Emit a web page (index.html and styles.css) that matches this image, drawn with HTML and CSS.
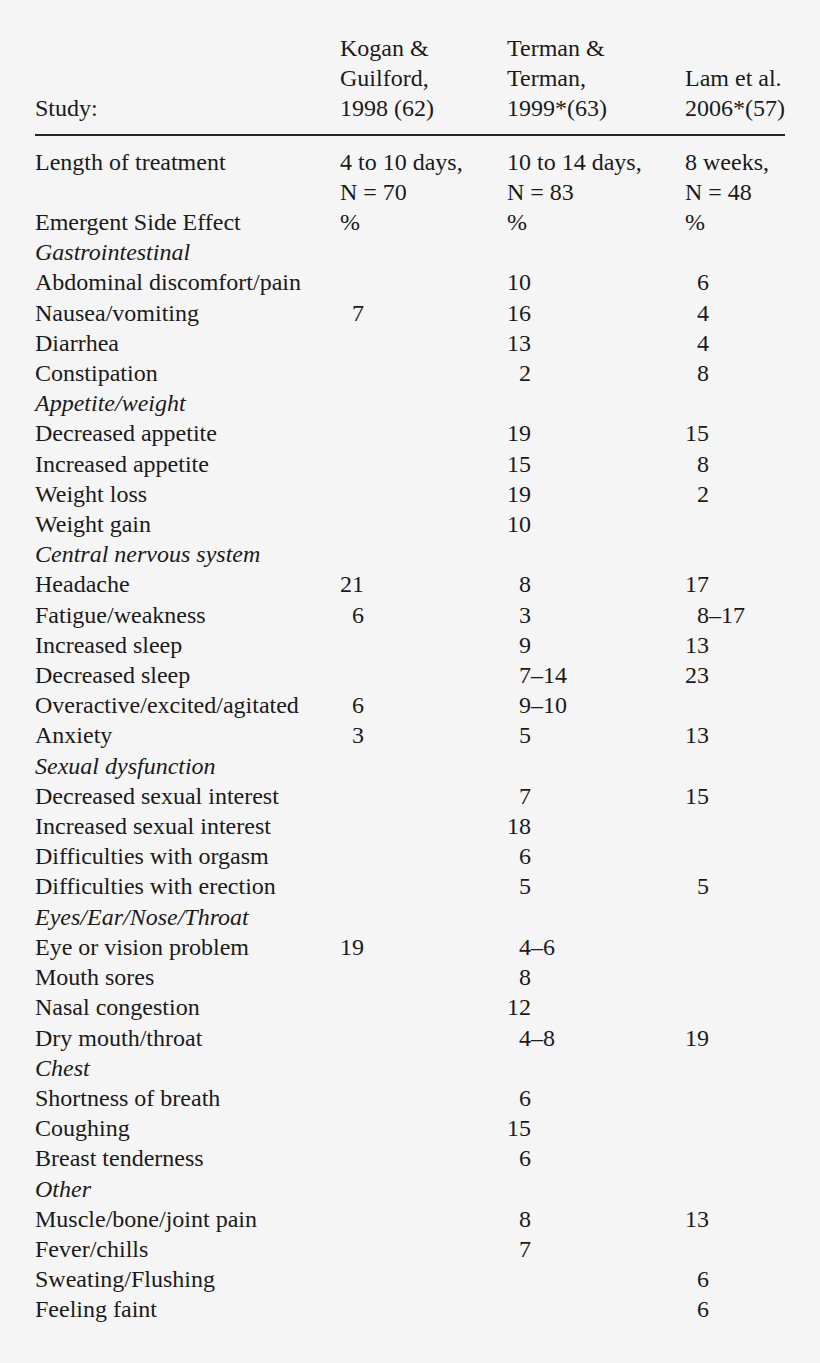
FILE: index.html
```html
<!DOCTYPE html>
<html lang="en">
<head>
    <meta charset="UTF-8">
    <meta name="viewport" content="width=device-width, initial-scale=1.0">
    <title>Emergent Side Effects</title>
    <link rel="stylesheet" href="styles.css">
</head>
<body>
    <table class="effects">
        <colgroup>
            <col class="c-label">
            <col class="c-kogan">
            <col class="c-terman">
            <col class="c-lam">
        </colgroup>
        <thead>
            <tr>
                <th>Study:</th>
                <th>Kogan &amp;<br>Guilford,<br>1998 (62)</th>
                <th>Terman &amp;<br>Terman,<br>1999*(63)</th>
                <th>Lam et al.<br>2006*(57)</th>
            </tr>
        </thead>
        <tbody>
            <tr class="first">
                <td>Length of treatment</td>
                <td>4 to 10 days,<br>N = 70</td>
                <td>10 to 14 days,<br>N = 83</td>
                <td>8 weeks,<br>N = 48</td>
            </tr>
            <tr>
                <td>Emergent Side Effect</td>
                <td>%</td>
                <td>%</td>
                <td>%</td>
            </tr>
            <tr class="group"><td colspan="4">Gastrointestinal</td></tr>
            <tr><td>Abdominal discomfort/pain</td><td></td><td><span class="n">10</span></td><td><span class="n">6</span></td></tr>
            <tr><td>Nausea/vomiting</td><td><span class="n">7</span></td><td><span class="n">16</span></td><td><span class="n">4</span></td></tr>
            <tr><td>Diarrhea</td><td></td><td><span class="n">13</span></td><td><span class="n">4</span></td></tr>
            <tr><td>Constipation</td><td></td><td><span class="n">2</span></td><td><span class="n">8</span></td></tr>
            <tr class="group"><td colspan="4">Appetite/weight</td></tr>
            <tr><td>Decreased appetite</td><td></td><td><span class="n">19</span></td><td><span class="n">15</span></td></tr>
            <tr><td>Increased appetite</td><td></td><td><span class="n">15</span></td><td><span class="n">8</span></td></tr>
            <tr><td>Weight loss</td><td></td><td><span class="n">19</span></td><td><span class="n">2</span></td></tr>
            <tr><td>Weight gain</td><td></td><td><span class="n">10</span></td><td></td></tr>
            <tr class="group"><td colspan="4">Central nervous system</td></tr>
            <tr><td>Headache</td><td><span class="n">21</span></td><td><span class="n">8</span></td><td><span class="n">17</span></td></tr>
            <tr><td>Fatigue/weakness</td><td><span class="n">6</span></td><td><span class="n">3</span></td><td><span class="n">8</span>–17</td></tr>
            <tr><td>Increased sleep</td><td></td><td><span class="n">9</span></td><td><span class="n">13</span></td></tr>
            <tr><td>Decreased sleep</td><td></td><td><span class="n">7</span>–14</td><td><span class="n">23</span></td></tr>
            <tr><td>Overactive/excited/agitated</td><td><span class="n">6</span></td><td><span class="n">9</span>–10</td><td></td></tr>
            <tr><td>Anxiety</td><td><span class="n">3</span></td><td><span class="n">5</span></td><td><span class="n">13</span></td></tr>
            <tr class="group"><td colspan="4">Sexual dysfunction</td></tr>
            <tr><td>Decreased sexual interest</td><td></td><td><span class="n">7</span></td><td><span class="n">15</span></td></tr>
            <tr><td>Increased sexual interest</td><td></td><td><span class="n">18</span></td><td></td></tr>
            <tr><td>Difficulties with orgasm</td><td></td><td><span class="n">6</span></td><td></td></tr>
            <tr><td>Difficulties with erection</td><td></td><td><span class="n">5</span></td><td><span class="n">5</span></td></tr>
            <tr class="group"><td colspan="4">Eyes/Ear/Nose/Throat</td></tr>
            <tr><td>Eye or vision problem</td><td><span class="n">19</span></td><td><span class="n">4</span>–6</td><td></td></tr>
            <tr><td>Mouth sores</td><td></td><td><span class="n">8</span></td><td></td></tr>
            <tr><td>Nasal congestion</td><td></td><td><span class="n">12</span></td><td></td></tr>
            <tr><td>Dry mouth/throat</td><td></td><td><span class="n">4</span>–8</td><td><span class="n">19</span></td></tr>
            <tr class="group"><td colspan="4">Chest</td></tr>
            <tr><td>Shortness of breath</td><td></td><td><span class="n">6</span></td><td></td></tr>
            <tr><td>Coughing</td><td></td><td><span class="n">15</span></td><td></td></tr>
            <tr><td>Breast tenderness</td><td></td><td><span class="n">6</span></td><td></td></tr>
            <tr class="group"><td colspan="4">Other</td></tr>
            <tr><td>Muscle/bone/joint pain</td><td></td><td><span class="n">8</span></td><td><span class="n">13</span></td></tr>
            <tr><td>Fever/chills</td><td></td><td><span class="n">7</span></td><td></td></tr>
            <tr><td>Sweating/Flushing</td><td></td><td></td><td><span class="n">6</span></td></tr>
            <tr><td>Feeling faint</td><td></td><td></td><td><span class="n">6</span></td></tr>
        </tbody>
    </table>
</body>
</html>
```

FILE: styles.css
```css
* {
    box-sizing: border-box;
}

body {
    margin: 0;
    padding: 33px 0 0 35px;
    background-color: #f5f5f5;
    color: #1a1a1a;
    font-family: "Liberation Serif", "Times New Roman", serif;
    font-size: 24px;
}

.effects {
    border-collapse: collapse;
    table-layout: fixed;
    width: 750px;
}

.c-label { width: 305px; }
.c-kogan { width: 167px; }
.c-terman { width: 178px; }
.c-lam { width: 100px; }

.effects th,
.effects td {
    padding: 0;
    line-height: 30.2px;
    text-align: left;
    white-space: nowrap;
    vertical-align: top;
}

.effects th {
    font-weight: normal;
    vertical-align: bottom;
    padding-bottom: 10px;
    border-bottom: 2px solid #262626;
}

.effects tr.first td {
    padding-top: 11px;
}

.effects tr.group td {
    font-style: italic;
}

/* first number of a cell, right aligned so the digits line up */
.n {
    display: inline-block;
    width: 24px;
    text-align: right;
}
```
